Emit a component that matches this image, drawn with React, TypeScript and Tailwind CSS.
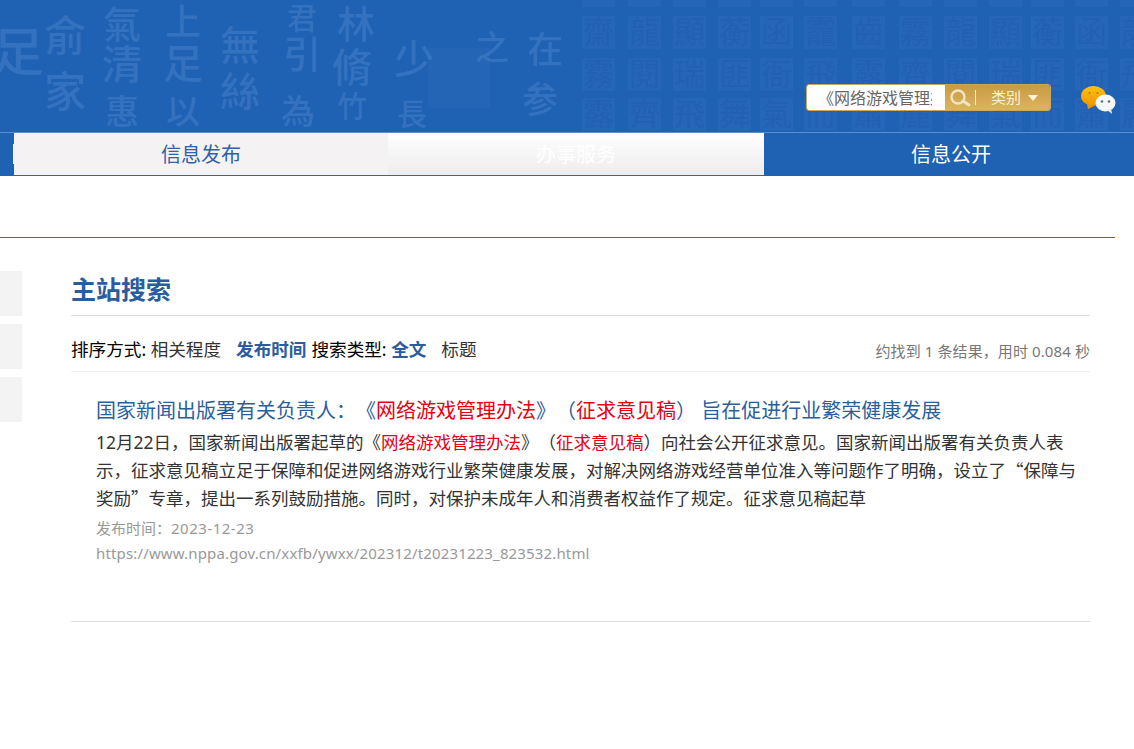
const FONT = { fontFamily: '"Noto Sans", "Noto Sans CJK SC", sans-serif' };

const brush: [string, number, number, number][] = [
  ["足", 18, 52, 52], ["俞", 65, 36, 42], ["家", 65, 92, 42], ["氣", 122, 24, 38], ["清", 122, 65, 40], ["惠", 122, 112, 34],
  ["上", 183, 22, 36], ["足", 183, 64, 40], ["以", 183, 112, 34], ["無", 240, 46, 40], ["絲", 240, 92, 40], ["君", 302, 18, 30],
  ["引", 302, 54, 38], ["為", 298, 112, 34], ["林", 356, 24, 38], ["脩", 352, 68, 40], ["竹", 352, 106, 30], ["少", 414, 60, 40],
  ["長", 412, 114, 30], ["之", 492, 48, 34], ["在", 545, 50, 36], ["参", 540, 100, 36],
];
const seals = "齋龍顯蘅函龗齒霧龍顯蘅函龍霧閱瑞匪衙飛露齊閱瑞匪衙飛露齊飛舞氣而蕭麗舞氣而蕭麗舞氣".split("");
const sealCols = [582, 628, 673, 718, 760, 804, 852, 899, 944, 989, 1031, 1075, 1120];
const sealRows = [-26, 16, 58, 98];

function BannerArt() {
  return (
    <svg className="absolute left-0 top-0 h-[132px] w-[1134px]" viewBox="0 0 1134 132" aria-hidden="true">
      <rect x="428" y="48" width="62" height="60" fill="#3f78c4" opacity="0.18" />
      {brush.map(([c, x, y, s]) => (
        <text key={`${c}${x}`} x={x} y={y + s * 0.36} fontSize={s} fill="#6b9ddb" opacity="0.28" textAnchor="middle" style={{ fontFamily: '"Noto Sans CJK TC", serif', fontWeight: 500 }}>
          {c}
        </text>
      ))}
      {sealRows.map((y, r) =>
        sealCols.map((x, c) => (
          <g key={`${r}-${c}`}>
            <rect x={x} y={y} width="33" height="33" fill="#2d6cc0" opacity="0.5" />
            {r > 0 && (
              <text x={x + 16.5} y={y + 27} fontSize="31" fill="#1a569f" opacity="0.28" textAnchor="middle" style={{ fontFamily: '"Noto Sans CJK TC", serif' }}>
                {seals[(r - 1) * 13 + c]}
              </text>
            )}
          </g>
        ))
      )}
    </svg>
  );
}

function SearchBox() {
  return (
    <div className="flex h-[27px] w-[245px] overflow-hidden rounded-[3px] border border-[#c9a85c]">
      <div className="flex w-[138px] items-center bg-white pl-[11px]">
        <div className="w-[114px] overflow-hidden whitespace-nowrap text-[16px] text-[#666]">《网络游戏管理办法》</div>
      </div>
      <div className="flex flex-1 items-center bg-gradient-to-b from-[#c69c42] to-[#dfb262]">
        <svg className="ml-[3px]" width="24" height="20" viewBox="0 0 24 20">
          <circle cx="10" cy="9" r="6.5" fill="none" stroke="#efe3c8" strokeWidth="2.4" />
          <path d="M15 13l6 4" stroke="#efe3c8" strokeWidth="3" strokeLinecap="round" />
        </svg>
        <span className="ml-[3px] h-[15px] w-px bg-[#f6efe0]" />
        <span className="ml-[15px] text-[15px] text-[#fff0d2]">类别</span>
        <span className="ml-[7px] h-0 w-0 border-x-[5px] border-t-[6px] border-x-transparent border-t-[#fff3dc]" />
      </div>
    </div>
  );
}

function WechatIcon() {
  return (
    <svg width="38" height="30" viewBox="0 0 38 30">
      <defs>
        <linearGradient id="yellow" x1="0" y1="0" x2="0" y2="1">
          <stop offset="0" stopColor="#ffc20e" />
          <stop offset="1" stopColor="#f09500" />
        </linearGradient>
      </defs>
      <ellipse cx="13.5" cy="11" rx="12.5" ry="10" fill="url(#yellow)" />
      <path d="M7 19l1 5 6-3z" fill="#f09500" />
      <circle cx="9.5" cy="8" r="1" fill="#b87408" />
      <circle cx="17.5" cy="8" r="1" fill="#b87408" />
      <ellipse cx="25.5" cy="18" rx="10" ry="8.5" fill="#f6f7f8" />
      <path d="M27 25l5 4-1-6z" fill="#e6e8ea" />
      <circle cx="22" cy="16.5" r="1.3" fill="#5d6f80" />
      <circle cx="29" cy="16.5" r="1.3" fill="#5d6f80" />
    </svg>
  );
}

function Result() {
  return (
    <div className="pl-[25px] pt-[24px]">
      <a className="block whitespace-nowrap text-[20px] leading-[30px] text-[#2a5f9e]">
        国家新闻出版署有关负责人：《<span className="text-[#e60012]">网络游戏管理办法</span>》（<span className="text-[#e60012]">征求意见稿</span>） 旨在促进行业繁荣健康发展
      </a>
      <p className="mt-[3px] w-[982px] text-[17.5px] leading-[27px] text-[#333]">
        12月22日，国家新闻出版署起草的《<span className="text-[#e60012]">网络游戏管理办法</span>》（<span className="text-[#e60012]">征求意见稿</span>）向社会公开征求意见。国家新闻出版署有关负责人表示，征求意见稿立足于保障和促进网络游戏行业繁荣健康发展，对解决网络游戏经营单位准入等问题作了明确，设立了
        <span className="font-['Noto_Sans_CJK_SC']">“</span>保障与奖励<span className="font-['Noto_Sans_CJK_SC']">”</span>专章，提出一系列鼓励措施。同时，对保护未成年人和消费者权益作了规定。征求意见稿起草
      </p>
      <p className="mt-[4px] text-[15px] leading-[25px] text-[#999]">
        发布时间：<span className="tracking-[0.5px]">2023-12-23</span>
      </p>
      <p className="text-[15px] leading-[25px] tracking-[0.15px] text-[#999]">https://www.nppa.gov.cn/xxfb/ywxx/202312/t20231223_823532.html</p>
    </div>
  );
}

export default function App() {
  return (
    <div className="min-h-[749px] overflow-hidden bg-white [text-spacing-trim:space-all]" style={FONT}>
      <header className="relative h-[176px] bg-[#1f61b3]">
        <BannerArt />
        <div className="relative flex h-[132px] items-end justify-end pb-[21px] pr-[16px]">
          <SearchBox />
          <div className="mb-[-4px] ml-[29px]">
            <WechatIcon />
          </div>
        </div>
        <nav className="relative flex h-[44px] border-t border-[#5a8fd2] pl-[14px] text-[20px]">
          <div className="relative flex h-[42px] w-[374px] items-center justify-center bg-[#f4f2f3] pt-[1px] text-[#2f62a8]">
            <span className="absolute left-[-1px] top-[11px] h-[20px] w-px bg-white" />
            信息发布
          </div>
          <div className="flex h-[42px] w-[376px] items-center justify-center bg-gradient-to-b from-white to-[#eeeced] pt-[1px] text-white">办事服务</div>
          <div className="flex h-[42px] flex-1 items-center justify-center pl-[4px] pt-[1px] text-white">信息公开</div>
          <span className="absolute bottom-0 left-[14px] h-px w-[750px] bg-[#2a6a9e]" />
        </nav>
      </header>

      <div className="mt-[61px] h-px w-[1115px] bg-[#3b7199]" />

      <div className="flex pt-[33px]">
        <aside className="flex w-[22px] flex-col gap-[8px]">
          <div className="h-[45px] bg-[#f3f3f3]" />
          <div className="h-[45px] bg-[#f3f3f3]" />
          <div className="h-[45px] bg-[#f3f3f3]" />
        </aside>
        <main className="ml-[49px] w-[1019px]">
          <h1 className="flex h-[45px] items-center border-b border-[#ddd] pb-[6px] text-[25px] font-bold text-[#2a5c9e]">主站搜索</h1>
          <div className="flex h-[56px] items-center justify-between border-b border-[#eee] pt-[12px] text-[17.6px] text-black">
            <div className="whitespace-pre">
              排序方式: <span className="text-[#333]">相关程度</span>
              <b className="ml-[15px] mr-[5px] text-[#2a5c9e]">发布时间</b>
              搜索类型: <b className="text-[#2a5c9e]">全文</b>
              <span className="ml-[15px] text-[#333]">标题</span>
            </div>
            <span className="pt-[3px] text-[15px] tracking-[0.1px] text-[#777]">约找到 1 条结果，用时 0.084 秒</span>
          </div>
          <div className="h-[250px] border-b border-[#ddd]">
            <Result />
          </div>
        </main>
      </div>
    </div>
  );
}
